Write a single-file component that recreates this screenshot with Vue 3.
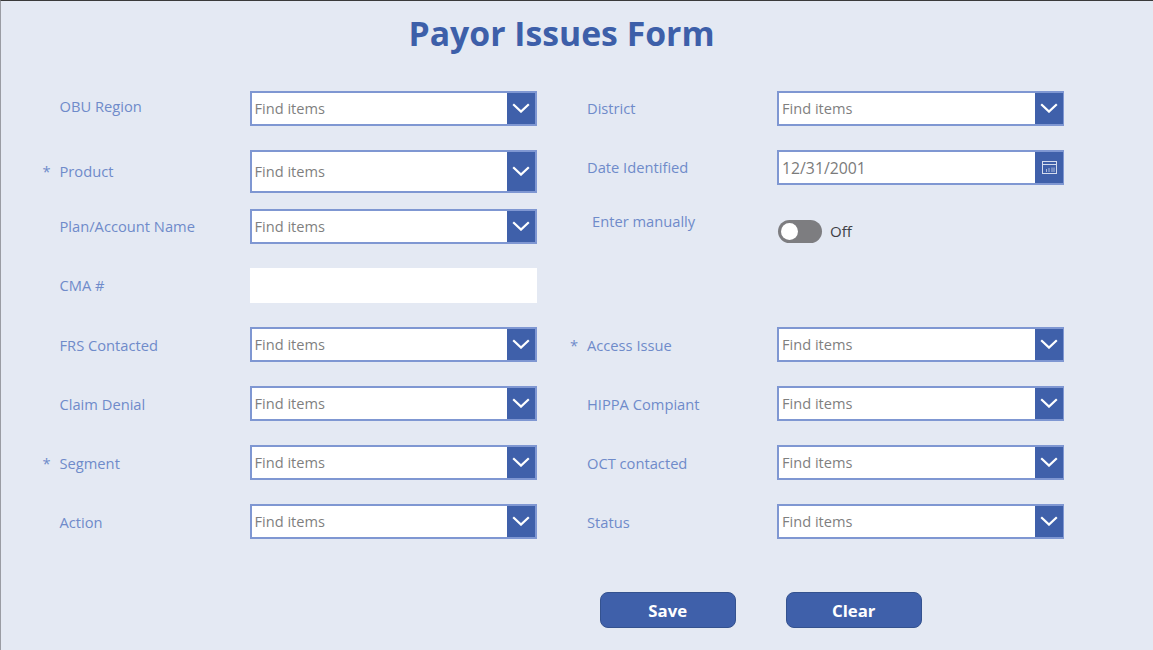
<script setup>
const rows = [
  {
    left: { label: 'OBU Region', type: 'select', nudge: 'n-up2' },
    right: { label: 'District', type: 'select' }
  },
  {
    left: { label: 'Product', type: 'select', star: true, tall: true, nudge: 'n-tall' },
    right: { label: 'Date Identified', type: 'date' }
  },
  {
    left: { label: 'Plan/Account Name', type: 'select' },
    right: { label: 'Enter manually', type: 'toggle', nudge: 'n-up5', indent: true }
  },
  {
    left: { label: 'CMA #', type: 'text' },
    right: null
  },
  {
    left: { label: 'FRS Contacted', type: 'select', nudge: 'n-down1' },
    right: { label: 'Access Issue', type: 'select', star: true, nudge: 'n-down1' }
  },
  {
    left: { label: 'Claim Denial', type: 'select', nudge: 'n-down1' },
    right: { label: 'HIPPA Compiant', type: 'select', nudge: 'n-down1' }
  },
  {
    left: { label: 'Segment', type: 'select', star: true, nudge: 'n-down1' },
    right: { label: 'OCT contacted', type: 'select', nudge: 'n-down1' }
  },
  {
    left: { label: 'Action', type: 'select', nudge: 'n-down1' },
    right: { label: 'Status', type: 'select', nudge: 'n-down1' }
  }
]

const cells = rows.flatMap((row, r) => [
  { key: `l${r}`, side: 'left', field: row.left },
  { key: `r${r}`, side: 'right', field: row.right }
])
</script>

<template>
  <main class="page">
    <h1 class="title">Payor Issues Form</h1>

    <section class="form">
      <template v-for="cell in cells" :key="cell.key">
        <template v-if="cell.field">
          <div class="label" :class="[cell.side, cell.field.nudge, { indent: cell.field.indent }]">
            <span class="star">{{ cell.field.star ? '*' : '' }}</span>
            <span>{{ cell.field.label }}</span>
          </div>

          <div
            v-if="cell.field.type === 'select'"
            class="combo"
            :class="[cell.side, { tall: cell.field.tall }]"
          >
            <span class="value placeholder">Find items</span>
            <span class="addon">
              <svg class="chevron" viewBox="0 0 18 10" aria-hidden="true">
                <path d="M1.2 1.2 9 8.6 16.8 1.2" fill="none" stroke="#fff" stroke-width="2.2" />
              </svg>
            </span>
          </div>

          <div v-else-if="cell.field.type === 'date'" class="combo" :class="cell.side">
            <span class="value date">12/31/2001</span>
            <span class="addon">
              <svg class="calendar" viewBox="0 0 15 15" aria-hidden="true">
                <rect x="0.5" y="1.5" width="14" height="12" fill="none" stroke="#d5dcee" stroke-width="1" />
                <path d="M0.5 4.5h14" stroke="#d5dcee" stroke-width="1" />
                <path d="M4.5 12V9M7 12V8M10 12V7.5M12 12V7.5" stroke="#aebbdd" stroke-width="1" />
              </svg>
            </span>
          </div>

          <div v-else-if="cell.field.type === 'text'" class="plain-input"></div>

          <div v-else class="toggle-wrap">
            <span class="toggle"><span class="knob"></span></span>
            <span class="toggle-text">Off</span>
          </div>
        </template>
        <template v-else>
          <div></div>
          <div></div>
        </template>
      </template>
    </section>

    <footer class="actions">
      <button class="btn save" type="button">Save</button>
      <button class="btn clear" type="button">Clear</button>
    </footer>
  </main>
</template>

<style scoped>
.page {
  box-sizing: border-box;
  width: 1153px;
  height: 650px;
  overflow: hidden;
  background: #e4e9f3;
  border-top: 1px solid #3a3a3a;
  border-left: 1px solid #9a9ca3;
  font-family: "Open Sans", "Noto Sans", sans-serif;
}

.title {
  margin: 0;
  height: 89.5px;
  padding-top: 10px;
  box-sizing: border-box;
  padding-left: 407.5px;
  font-size: 33.75px;
  line-height: 45px;
  font-weight: 700;
  color: #3d5fa9;
  white-space: nowrap;
}

.form {
  display: grid;
  grid-template-columns: 248.5px 287px 240.5px 287px;
  grid-auto-rows: 59px;
  align-items: start;
}

.label {
  box-sizing: border-box;
  display: flex;
  align-items: center;
  height: 35px;
  padding-bottom: 1px;
  font-size: 14.7px;
  color: #6f8bca;
  white-space: nowrap;
}

.label.left {
  padding-left: 41.5px;
}

.label.right {
  padding-left: 33.5px;
}

.label.indent {
  padding-left: 38.5px;
}

.star {
  flex: 0 0 17px;
}

.n-up2 {
  margin-top: -2px;
}

.n-up5 {
  margin-top: -5px;
}

.n-down1 {
  margin-top: 1px;
}

.n-tall {
  height: 43px;
}

.combo {
  box-sizing: border-box;
  display: flex;
  height: 35.5px;
  background: #fff;
  border: 2px solid #7f97d2;
}

.combo.right {
  border-right-width: 1px;
}

.combo.tall {
  height: 43px;
}

.value {
  flex: 1;
  padding-left: 3px;
  font-size: 14.6px;
  line-height: 31px;
  color: #7f7f7f;
}

.tall .value {
  line-height: 39px;
}

.value.date {
  font-size: 15.8px;
  line-height: 32px;
  color: #7b7b7b;
}

.addon {
  flex: 0 0 28px;
  display: flex;
  align-items: center;
  justify-content: center;
  background: #3f60aa;
}

.chevron {
  width: 18px;
  height: 10px;
}

.calendar {
  width: 15px;
  height: 15px;
}

.plain-input {
  height: 35.5px;
  background: #fff;
}

.toggle-wrap {
  display: flex;
  align-items: center;
  gap: 8px;
  margin-top: 11.5px;
  padding-left: 1px;
  height: 23px;
}

.toggle {
  box-sizing: border-box;
  display: flex;
  align-items: center;
  width: 44px;
  height: 23px;
  padding-left: 3px;
  border-radius: 12px;
  background: #7d7d80;
}

.knob {
  width: 17px;
  height: 17px;
  border-radius: 50%;
  background: #fff;
}

.toggle-text {
  font-size: 15px;
  line-height: 22px;
  padding-bottom: 1px;
  color: #3f3f46;
}

.actions {
  display: flex;
  gap: 49.5px;
  padding-left: 598.5px;
  padding-top: 29.5px;
}

.btn {
  box-sizing: border-box;
  width: 136.5px;
  height: 36px;
  padding: 0;
  background: #3f60aa;
  border: 1px solid #34528f;
  border-radius: 8px;
  color: #fff;
  font-family: inherit;
  font-size: 16.8px;
  font-weight: 700;
}
</style>
